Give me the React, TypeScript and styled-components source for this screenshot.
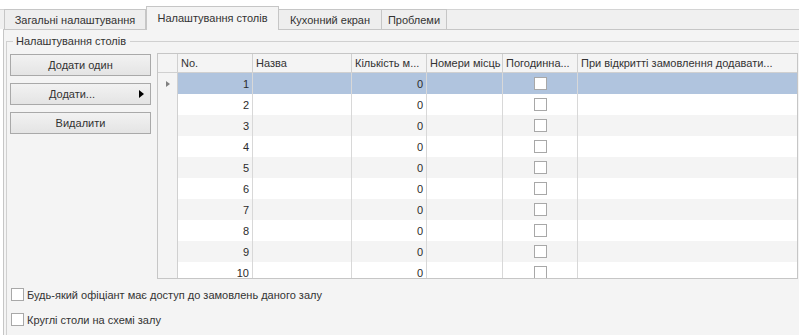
import * as React from 'react';
import styled, { createGlobalStyle } from 'styled-components';

type TabProps = { active?: boolean; width: number };
type RowProps = { selected?: boolean; odd?: boolean };
type CellProps = { align?: 'left' | 'right' | 'center'; last?: boolean };

const GlobalStyle = createGlobalStyle`
  body {
    margin: 0;
    background: #ffffff;
    font-family: "Liberation Sans", Arial, sans-serif;
    font-size: 11px;
    color: #333333;
  }
`;

const tabs = [
  { title: 'Загальні налаштування', width: 142 },
  { title: 'Налаштування столів', width: 133, active: true },
  { title: 'Кухонний екран', width: 103 },
  { title: 'Проблеми', width: 65 },
];

const columns: { title: string; align: 'left' | 'right' | 'center' }[] = [
  { title: '', align: 'left' },
  { title: 'No.', align: 'right' },
  { title: 'Назва', align: 'left' },
  { title: 'Кількість м...', align: 'right' },
  { title: 'Номери місць', align: 'left' },
  { title: 'Погодинна...', align: 'center' },
  { title: 'При відкритті замовлення додавати...', align: 'left' },
];

const rows = Array.from({ length: 10 }, (_, i) => ({ no: i + 1, seats: 0 }));

const App = () => {
  return (
    <Page>
      <GlobalStyle />
      <TabStrip>
        {tabs.map((tab) => (
          <Tab key={tab.title} active={tab.active} width={tab.width}>
            {tab.title}
          </Tab>
        ))}
      </TabStrip>
      <Panel>
        <GroupBox>
          <Legend>Налаштування столів</Legend>
          <GroupBody>
            <ButtonColumn>
              <Button>Додати один</Button>
              <Button>
                <ButtonLabel>Додати...</ButtonLabel>
                <Arrow />
              </Button>
              <Button>Видалити</Button>
            </ButtonColumn>
            <Grid>
              <HeaderRow>
                {columns.map((col, i) => (
                  <HeaderCell key={i} last={i === columns.length - 1}>
                    {col.title}
                  </HeaderCell>
                ))}
              </HeaderRow>
              <GridBody>
                {rows.map((row, i) => (
                  <Row key={row.no} selected={i === 0} odd={i % 2 === 0}>
                    <RowHeader>{i === 0 && <RowMarker />}</RowHeader>
                    <Cell align="right">{row.no}</Cell>
                    <Cell />
                    <Cell align="right">{row.seats}</Cell>
                    <Cell />
                    <Cell align="center">
                      <Check />
                    </Cell>
                    <Cell last />
                  </Row>
                ))}
              </GridBody>
            </Grid>
          </GroupBody>
          <Option>
            <Check />
            Будь-який офіціант має доступ до замовлень даного залу
          </Option>
          <Option>
            <Check />
            Круглі столи на схемі залу
          </Option>
        </GroupBox>
      </Panel>
    </Page>
  );
};

const Page = styled.div`
  width: 799px;
  height: 335px;
  overflow: hidden;
  padding-top: 6px;
  box-sizing: border-box;
`;

const TabStrip = styled.div`
  display: flex;
  align-items: flex-end;
  height: 23px;
  padding-left: 4px;
  background: linear-gradient(
    to bottom,
    #ffffff 0 3px,
    #d4d4d4 3px 4px,
    #f0f0f0 4px
  );
  position: relative;
  z-index: 1;
`;

const Tab = styled.div<TabProps>`
  box-sizing: border-box;
  width: ${(p) => p.width}px;
  height: ${(p) => (p.active ? 24 : 20)}px;
  margin-bottom: ${(p) => (p.active ? -1 : 0)}px;
  border: 1px solid #c6c6c6;
  border-bottom: none;
  border-left: ${(p) => (p.active ? '1px solid #c6c6c6' : 'none')};
  background: ${(p) => (p.active ? '#f4f4f4' : '#eeeeee')};
  color: #333333;
  display: flex;
  align-items: center;
  justify-content: center;
  padding-bottom: ${(p) => (p.active ? 2 : 0)}px;
  white-space: nowrap;
  &:first-child {
    border-left: 1px solid #c6c6c6;
  }
`;

const Panel = styled.div`
  margin-left: 3px;
  height: 320px;
  border: 1px solid #c6c6c6;
  border-right: none;
  background: #f4f4f4;
  padding-left: 2px;
  padding-top: 4px;
`;

const GroupBox = styled.fieldset`
  margin: 0;
  padding: 0 0 0 3px;
  min-inline-size: 0;
  height: 320px;
  border: 1px solid #d0d0d0;
  border-right: none;
`;

const Legend = styled.legend`
  margin-left: 3px;
  padding: 0 4px 0 3px;
  line-height: 14px;
  color: #333333;
`;

const GroupBody = styled.div`
  display: flex;
  gap: 6px;
  margin-top: 5px;
`;

const ButtonColumn = styled.div`
  display: flex;
  flex-direction: column;
  gap: 7px;
  width: 141px;
  padding-top: 1px;
`;

const Button = styled.button`
  box-sizing: border-box;
  height: 22px;
  width: 100%;
  display: flex;
  align-items: center;
  justify-content: center;
  padding: 0;
  border: 1px solid #a9a9a9;
  background: linear-gradient(to bottom, #f2f2f2, #e4e4e4);
  font-family: inherit;
  font-size: 11px;
  color: #333333;
`;

const ButtonLabel = styled.span`
  flex: 1;
  text-align: center;
  padding-right: 6px;
`;

const Arrow = styled.span`
  width: 0;
  height: 0;
  margin-right: 6px;
  border-top: 4.5px solid transparent;
  border-bottom: 4.5px solid transparent;
  border-left: 5px solid #000000;
`;

const Grid = styled.div`
  box-sizing: border-box;
  width: 641px;
  height: 226px;
  border: 1px solid #c6c6c6;
  background: #ffffff;
  display: flex;
  flex-direction: column;
  overflow: hidden;
`;

const gridColumns = '20px 75px 99px 75px 76px 75px 1fr';

const HeaderRow = styled.div`
  display: grid;
  grid-template-columns: ${gridColumns};
  height: 19px;
  background: #f4f4f4;
  border-bottom: 1px solid #d0d0d0;
  box-sizing: border-box;
`;

const HeaderCell = styled.div<CellProps>`
  border-right: ${(p) => (p.last ? 'none' : '1px solid #d0d0d0')};
  padding-left: 3px;
  line-height: 18px;
  white-space: nowrap;
  overflow: hidden;
  color: #333333;
`;

const GridBody = styled.div`
  flex: 1;
  overflow: hidden;
`;

const Row = styled.div<RowProps>`
  display: grid;
  grid-template-columns: ${gridColumns};
  height: 21px;
  background: ${(p) =>
    p.selected ? '#b0c4de' : p.odd ? '#f4f4f4' : '#ffffff'};
`;

const RowHeader = styled.div`
  background: #f4f4f4;
  border-right: 1px solid #d0d0d0;
  display: flex;
  align-items: center;
  padding-left: 8px;
`;

const RowMarker = styled.span`
  width: 0;
  height: 0;
  border-top: 3.5px solid transparent;
  border-bottom: 3.5px solid transparent;
  border-left: 4px solid #808080;
`;

const Cell = styled.div<CellProps>`
  border-right: ${(p) => (p.last ? 'none' : '1px solid #d8d8d8')};
  display: flex;
  align-items: center;
  justify-content: ${(p) =>
    p.align === 'right' ? 'flex-end' : p.align === 'center' ? 'center' : 'flex-start'};
  padding: 0 3px;
  color: #2b2b2b;
`;

const Check = styled.span`
  box-sizing: border-box;
  width: 13px;
  height: 13px;
  flex: none;
  border: 1px solid #a8a8a8;
  background: #ffffff;
`;

const Option = styled.label`
  display: flex;
  align-items: center;
  gap: 3px;
  height: 13px;
  margin: 9px 0 0 1px;
  & + & {
    margin-top: 12px;
  }
`;

export default App;
